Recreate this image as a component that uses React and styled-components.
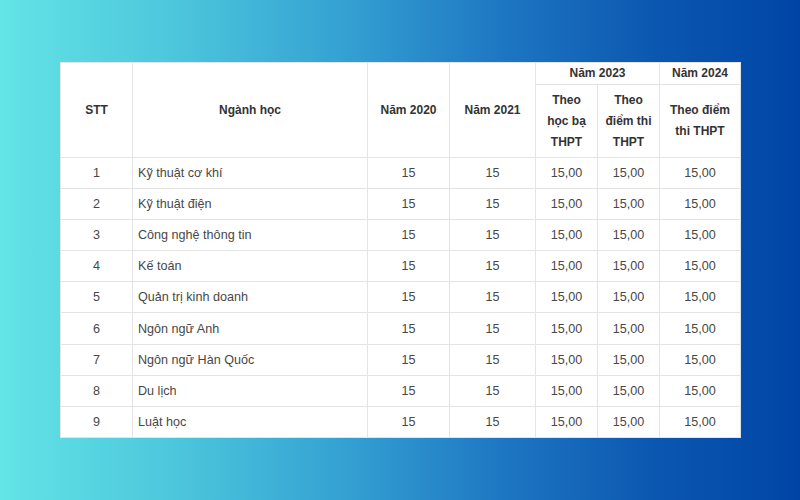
import React from "react";
import styled, { createGlobalStyle } from "styled-components";

const Global = createGlobalStyle`
  html, body { margin: 0; padding: 0; }
  body { width: 800px; height: 500px; overflow: hidden; }
  #root { width: 800px; height: 500px; }
`;

const Page = styled.div`
  width: 800px;
  height: 500px;
  box-sizing: border-box;
  padding-top: 62px;
  padding-left: 60px;
  background: linear-gradient(90deg, #63e4e6 0%, #4cc6dc 22%, #35a3d3 42%, #1f78c3 62%, #0b57b0 82%, #0045a6 100%);
  font-family: "Liberation Sans", Arial, sans-serif;
`;

const Table = styled.table`
  width: 680px;
  border-collapse: collapse;
  table-layout: fixed;
  background: #ffffff;
  color: #444;
`;

const Th = styled.th`
  border: 1px solid #e4e4e4;
  font-size: 12px;
  font-weight: bold;
  color: #333;
  line-height: 21px;
  padding: 0 4px;
  text-align: center;
  vertical-align: middle;
  height: ${(p) => p.$h || "auto"};
`;

const Td = styled.td`
  border: 1px solid #e4e4e4;
  font-size: 12.6px;
  color: #474747;
  height: 30.1px;
  padding: 0 5px;
  text-align: ${(p) => (p.$left ? "left" : "center")};
  vertical-align: middle;
  white-space: nowrap;
`;

const Row = styled.tr``;

const rows = [
  ["1", "Kỹ thuật cơ khí"],
  ["2", "Kỹ thuật điện"],
  ["3", "Công nghệ thông tin"],
  ["4", "Kế toán"],
  ["5", "Quản trị kinh doanh"],
  ["6", "Ngôn ngữ Anh"],
  ["7", "Ngôn ngữ Hàn Quốc"],
  ["8", "Du lịch"],
  ["9", "Luật học"],
];

export default function App() {
  return (
    <Page>
      <Global />
      <Table>
        <colgroup>
          <col style={{ width: 72 }} />
          <col style={{ width: 235 }} />
          <col style={{ width: 82 }} />
          <col style={{ width: 86 }} />
          <col style={{ width: 62 }} />
          <col style={{ width: 62 }} />
          <col style={{ width: 81 }} />
        </colgroup>
        <thead>
          <Row>
            <Th rowSpan={2}>STT</Th>
            <Th rowSpan={2}>Ngành học</Th>
            <Th rowSpan={2}>Năm 2020</Th>
            <Th rowSpan={2}>Năm 2021</Th>
            <Th colSpan={2} $h="21px">Năm 2023</Th>
            <Th $h="21px">Năm 2024</Th>
          </Row>
          <Row>
            <Th $h="72px">Theo<br />học bạ<br />THPT</Th>
            <Th $h="72px">Theo<br />điểm thi<br />THPT</Th>
            <Th $h="72px">Theo điểm<br />thi THPT</Th>
          </Row>
        </thead>
        <tbody>
          {rows.map(([n, name]) => (
            <Row key={n}>
              <Td>{n}</Td>
              <Td $left>{name}</Td>
              <Td>15</Td>
              <Td>15</Td>
              <Td>15,00</Td>
              <Td>15,00</Td>
              <Td>15,00</Td>
            </Row>
          ))}
        </tbody>
      </Table>
    </Page>
  );
}
